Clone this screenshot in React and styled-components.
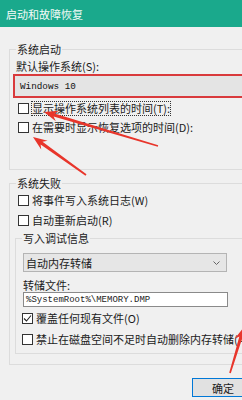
import styled, { createGlobalStyle } from "styled-components";

const GlobalStyle = createGlobalStyle`
  body {
    margin: 0;
    background: #f0f0f0;
    font-family: "Noto Sans CJK SC", "Noto Sans", sans-serif;
  }
`;

const Window = styled.div`
  position: relative;
  width: 242px;
  height: 400px;
  overflow: hidden;
  background: #f0f0f0;
  color: #1b1b1b;
  font-size: 11px;
`;

const TitleBar = styled.div`
  height: 27px;
  display: flex;
  align-items: center;
  padding-left: 6px;
  background: #1aa98c;
  color: #f4fbf8;
  font-size: 11px;
`;

const Body = styled.div`
  padding-left: 9px;
`;

const GroupBox = styled.fieldset`
  min-width: 0;
  margin: ${(p) => p.$top}px -40px 0 ${(p) => p.$left || 0}px;
  padding: ${(p) => p.$pt}px 0 ${(p) => p.$pb}px 6px;
  border: 1px solid #dcdcdc;
`;

const Legend = styled.legend`
  padding: 0 1px;
  line-height: 14px;
  font-size: 11px;
`;

const FieldLabel = styled.div`
  line-height: ${(p) => p.$lh || 14}px;
  margin-top: ${(p) => p.$top || 0}px;
  margin-left: ${(p) => p.$left || 0}px;
`;

const HighlightCombo = styled.div`
  box-sizing: border-box;
  height: 24px;
  margin: 1px 0 0 -3px;
  padding-left: 5px;
  display: flex;
  align-items: center;
  border: 2px solid #d93a3c;
  background: #e4e4e4;
  font-family: "Liberation Mono", monospace;
  font-size: 9.3px;
  color: #111;
`;

const Combo = styled.div`
  box-sizing: border-box;
  width: 204px;
  height: 19px;
  margin-left: 1px;
  padding: 0 6px 0 2px;
  display: flex;
  align-items: center;
  justify-content: space-between;
  border: 1px solid #b4b4b4;
  background: #e6e6e6;
  font-size: 11px;
`;

const PathInput = styled.div`
  box-sizing: border-box;
  width: 205px;
  height: 15px;
  margin-left: 1px;
  padding-left: 2px;
  display: flex;
  align-items: center;
  border: 1px solid #8a8a8a;
  background: #fff;
  font-family: "Liberation Mono", monospace;
  font-size: 9px;
  color: #222;
`;

const CheckRow = styled.div`
  height: 14px;
  display: flex;
  align-items: center;
  gap: 3px;
  margin-top: ${(p) => p.$top || 0}px;
  margin-left: ${(p) => p.$left || 0}px;
  white-space: nowrap;
`;

const Box = styled.span`
  box-sizing: border-box;
  flex: none;
  width: 11px;
  height: 11px;
  display: flex;
  align-items: center;
  justify-content: center;
  border: 1px solid #333;
  background: #fff;
`;

const CheckText = styled.span`
  line-height: 13px;
  outline: ${(p) => (p.$focused ? "1px dotted #333" : "none")};
`;

const ButtonRow = styled.div`
  display: flex;
  margin-top: 13px;
  padding-left: 183px;
`;

const Button = styled.div`
  box-sizing: border-box;
  flex: none;
  width: 62px;
  height: 19px;
  display: flex;
  align-items: center;
  justify-content: center;
  border: 1px solid #0078d7;
  background: #e1e1e1;
  font-size: 11px;
`;

const Annotations = styled.svg`
  position: absolute;
  top: 0;
  left: 0;
  pointer-events: none;
`;

const Check = ({ checked, children, focused, top, left }) => (
  <CheckRow $top={top} $left={left}>
    <Box>
      {checked && (
        <svg width="9" height="9" viewBox="0 0 9 9">
          <polyline points="1,4.5 3.5,7 8,1.5" fill="none" stroke="#222" strokeWidth="1.1" />
        </svg>
      )}
    </Box>
    <CheckText $focused={focused}>{children}</CheckText>
  </CheckRow>
);

// red marker arrow: tapering shaft + swept head
const arrowPoints = (tx, ty, sx, sy, headLen = 14, headW = 11, sw = 3.2, sw2 = 1.6) => {
  const dx = tx - sx;
  const dy = ty - sy;
  const len = Math.hypot(dx, dy);
  const ux = dx / len;
  const uy = dy / len;
  const nx = -uy;
  const ny = ux;
  const bx = tx - ux * headLen;
  const by = ty - uy * headLen;
  const cx = tx - ux * headLen * 0.75;
  const cy = ty - uy * headLen * 0.75;
  const pts = [
    [tx, ty],
    [bx + (nx * headW) / 2, by + (ny * headW) / 2],
    [cx + (nx * sw) / 2, cy + (ny * sw) / 2],
    [sx + (nx * sw2) / 2, sy + (ny * sw2) / 2],
    [sx - (nx * sw2) / 2, sy - (ny * sw2) / 2],
    [cx - (nx * sw) / 2, cy - (ny * sw) / 2],
    [bx - (nx * headW) / 2, by - (ny * headW) / 2],
  ];
  return pts.map((p) => p.map((v) => v.toFixed(1)).join(",")).join(" ");
};

const App = () => {
  return (
    <>
      <GlobalStyle />
      <Window>
        <TitleBar>启动和故障恢复</TitleBar>
        <Body>
          <GroupBox $top={15} $pt={3} $pb={35}>
            <Legend>系统启动</Legend>
            <FieldLabel>默认操作系统(S):</FieldLabel>
            <HighlightCombo>Windows 10</HighlightCombo>
            <Check top={3} left={2} focused>
              显示操作系统列表的时间(T):
            </Check>
            <Check top={5} left={2}>
              在需要时显示恢复选项的时间(D):
            </Check>
          </GroupBox>

          <GroupBox $top={6} $pt={3} $pb={10}>
            <Legend>系统失败</Legend>
            <Check left={2}>将事件写入系统日志(W)</Check>
            <Check top={6} left={2}>
              自动重新启动(R)
            </Check>
            <GroupBox $top={4} $left={-1} $pt={8} $pb={7}>
              <Legend>写入调试信息</Legend>
              <Combo>
                <span>自动内存转储</span>
                <svg width="7" height="4" viewBox="0 0 7 4">
                  <polyline points="0.5,0.5 3.5,3.5 6.5,0.5" fill="none" stroke="#666" strokeWidth="1" />
                </svg>
              </Combo>
              <FieldLabel $top={7} $left={1} $lh={13}>
                转储文件:
              </FieldLabel>
              <PathInput>%SystemRoot%\MEMORY.DMP</PathInput>
              <Check top={4} checked>
                覆盖任何现有文件(O)
              </Check>
              <Check top={7}>禁止在磁盘空间不足时自动删除内存转储(A)</Check>
            </GroupBox>
          </GroupBox>

          <ButtonRow>
            <Button>确定</Button>
          </ButtonRow>
        </Body>

        <Annotations width="242" height="400" viewBox="0 0 242 400">
          <polygon points={arrowPoints(44, 112, 158, 146)} fill="#e8352b" />
          <polygon points={arrowPoints(33, 137, 86, 175)} fill="#e8352b" />
          <polygon points={arrowPoints(244, 327, 230, 373)} fill="#e8352b" />
        </Annotations>
      </Window>
    </>
  );
};

export default App;
